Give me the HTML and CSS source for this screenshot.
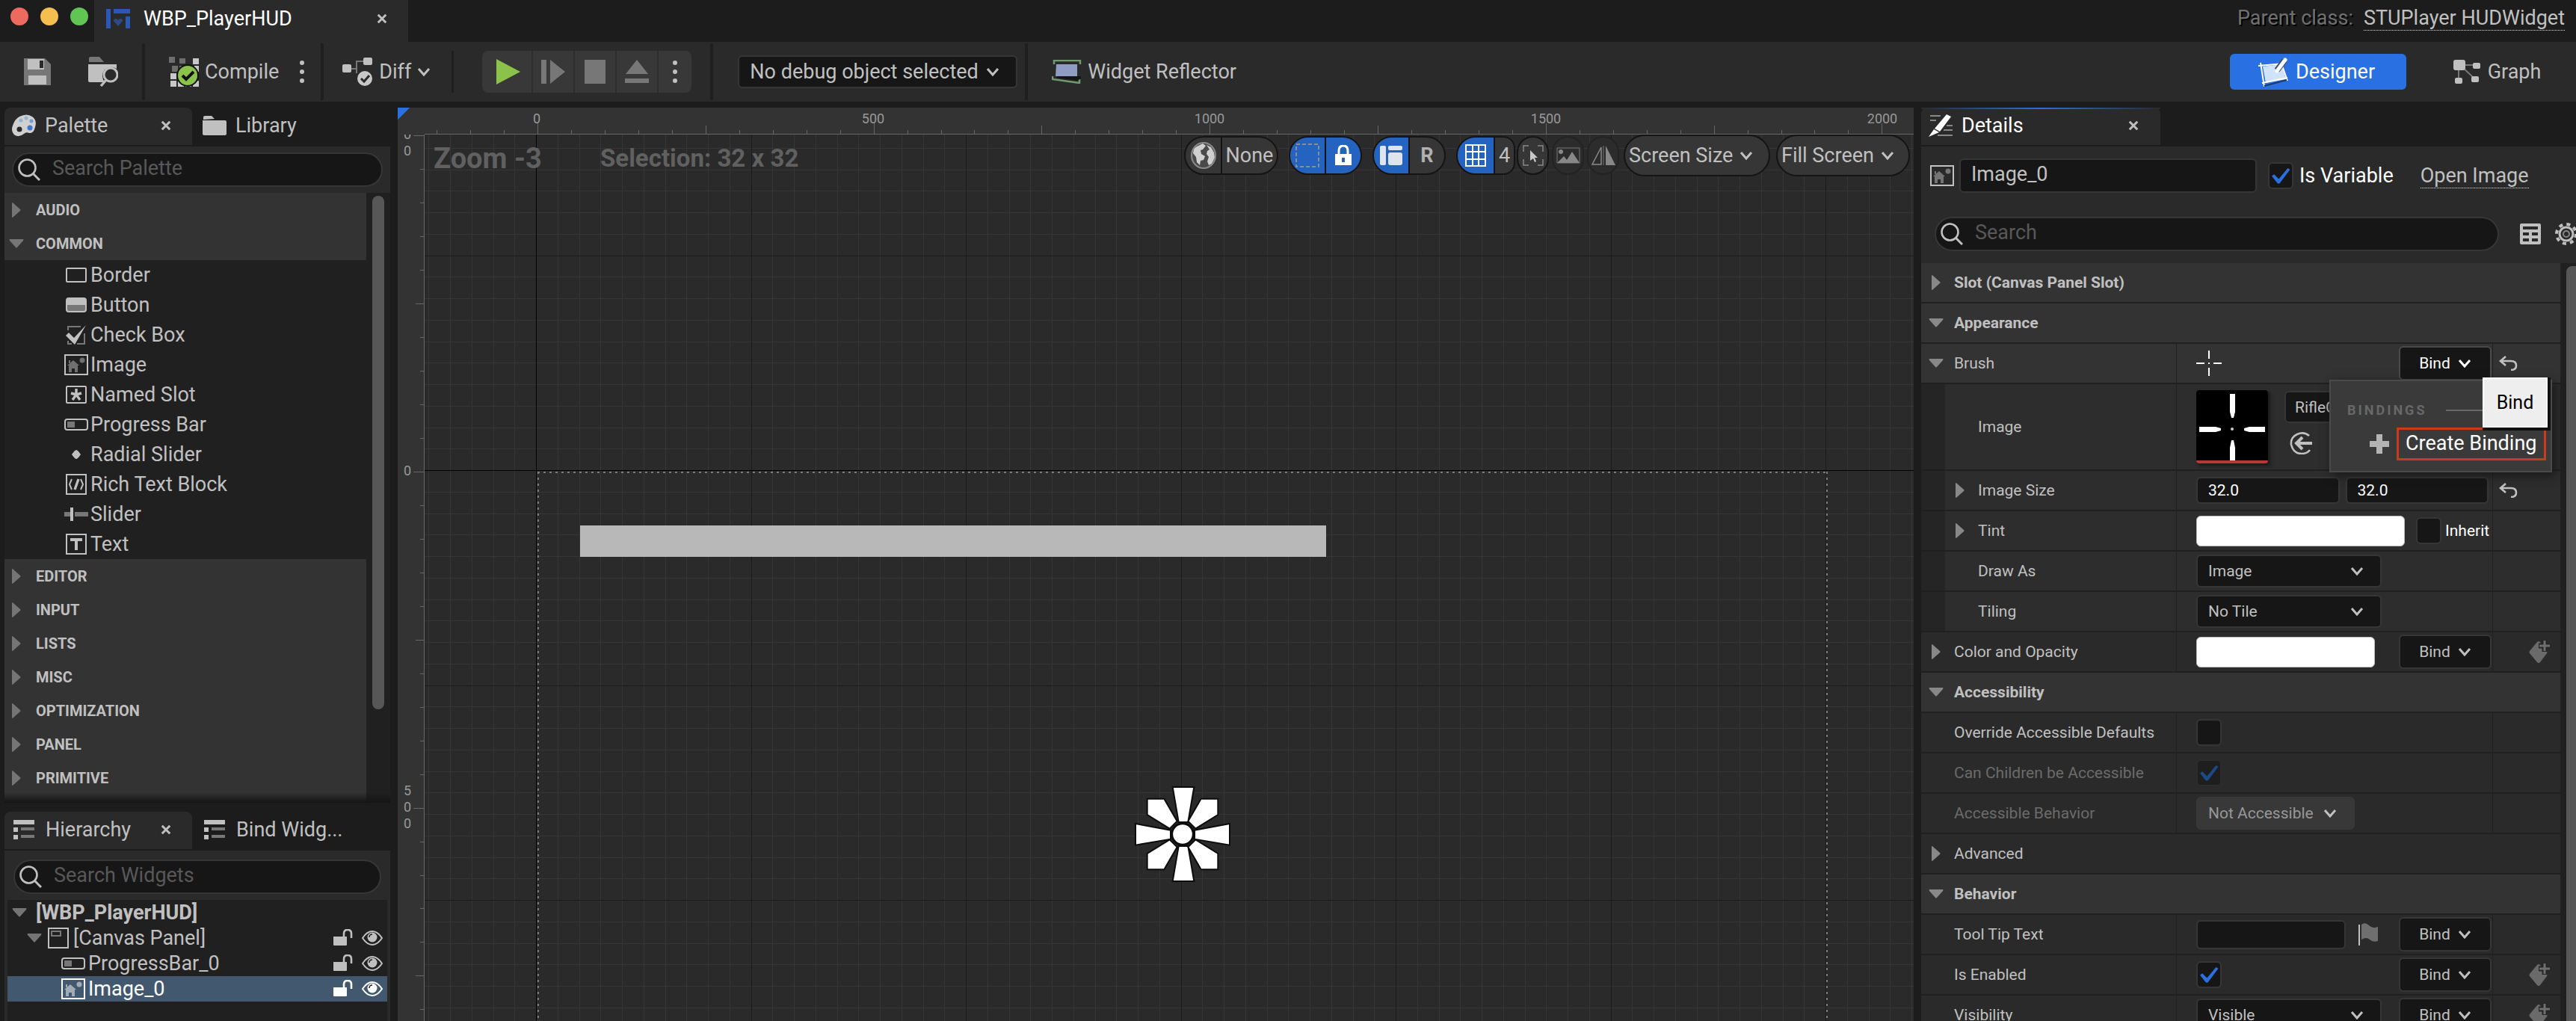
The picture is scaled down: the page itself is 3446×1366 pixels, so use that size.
FILE: index.html
```html
<!DOCTYPE html>
<html lang="en">
<head>
<meta charset="utf-8">
<title>WBP_PlayerHUD</title>
<link rel="stylesheet" href="styles.css">
</head>
<body>
<svg class="sprite" aria-hidden="true">
  <symbol id="i-chev" viewBox="0 0 18 12"><path d="M2 2l7 8 7-8" fill="none" stroke="currentColor" stroke-width="3"/></symbol>
  <symbol id="i-close" viewBox="0 0 16 16"><path d="M2 2l12 12M14 2L2 14" stroke="currentColor" stroke-width="3.4"/></symbol>
  <symbol id="i-dots" viewBox="0 0 6 32"><circle cx="3" cy="4" r="3" fill="currentColor"/><circle cx="3" cy="16" r="3" fill="currentColor"/><circle cx="3" cy="28" r="3" fill="currentColor"/></symbol>
  <symbol id="i-right" viewBox="0 0 20 20"><path d="M4 1q0-2 2 0l9 8q1 1 0 2l-9 8q-2 2-2 0z" fill="currentColor"/></symbol>
  <symbol id="i-down" viewBox="0 0 20 20"><path d="M1 4h18q1 0 0 2l-8 9q-1 1-2 0L1 6q-1-2 0-2z" fill="currentColor"/></symbol>
  <symbol id="i-search" viewBox="0 0 30 30"><circle cx="12.500" cy="12.500" r="11" fill="none" stroke="currentColor" stroke-width="2.600"/><path d="M20 20l9 9" stroke="currentColor" stroke-width="3"/></symbol>
  <symbol id="i-folder" viewBox="0 0 32 26"><path d="M1 5V2q0-2 2-2h9l4 4z" fill="currentColor"/><path d="M0 6h30q2 0 2 2v16q0 2-2 2H2q-2 0-2-2z" fill="currentColor"/></symbol>
  <symbol id="i-list" viewBox="0 0 28 26"><path d="M0 0h28v6H0zM0 10h6v6H0zM0 20h6v6H0z" fill="currentColor"/><path d="M10 10h18v4H10zM10 20h18v4H10z" fill="#777"/></symbol>
  <symbol id="i-border" viewBox="0 0 32 28"><rect x="3" y="5" width="26" height="18" rx="1" fill="none" stroke="currentColor" stroke-width="2"/></symbol>
  <symbol id="i-button" viewBox="0 0 32 28"><rect x="2" y="4" width="28" height="20" rx="4" fill="currentColor"/><path d="M4 14h24v6q0 2-2 2H6q-2 0-2-2z" fill="#777"/></symbol>
  <symbol id="i-check" viewBox="0 0 32 28"><path d="M5 8V3h17M27 12v14h-10M5 22v4h5" fill="none" stroke="#777" stroke-width="2"/><path d="M2 15l4-4 7 7L29 1 14 27z" fill="currentColor"/></symbol>
  <symbol id="i-image" viewBox="0 0 32 28"><rect x="1" y="1" width="30" height="26" fill="none" stroke="currentColor" stroke-width="2"/><path d="M4 15l8-7 8 7h-2v9h-4v-5h-4v5H6v-9zM6 8h2v4H6z" fill="currentColor" opacity=".5"/><circle cx="24" cy="8" r="3.500" fill="currentColor" opacity=".5"/></symbol>
  <symbol id="i-slot" viewBox="0 0 32 28"><rect x="3" y="3" width="26" height="22" rx="1" fill="none" stroke="currentColor" stroke-width="2"/><path d="M16 6v8M16 14l-7-2M16 14l7-2M16 14l-5 7M16 14l5 7" stroke="currentColor" stroke-width="3.400"/></symbol>
  <symbol id="i-progress" viewBox="0 0 32 28"><rect x="1" y="7" width="30" height="14" rx="3" fill="none" stroke="currentColor" stroke-width="2"/><path d="M4 10h10v8H4z" fill="currentColor" opacity=".55"/></symbol>
  <symbol id="i-radial" viewBox="0 0 32 28"><path d="M16 8q2 0 6 6-4 6-6 6t-6-6q4-6 6-6z" fill="currentColor"/></symbol>
  <symbol id="i-rich" viewBox="0 0 32 28"><rect x="3" y="1" width="26" height="26" fill="none" stroke="currentColor" stroke-width="2"/><path d="M10 7l-3 7 3 7M22 7l3 7-3 7" fill="none" stroke="currentColor" stroke-width="2"/><path d="M19 7l-5 14" stroke="currentColor" stroke-width="3.400"/></symbol>
  <symbol id="i-slider" viewBox="0 0 32 28"><path d="M0 11h8v6H0zM14 11h18v6H14z" fill="#777"/><path d="M8 5h4v18H8z" fill="currentColor"/></symbol>
  <symbol id="i-text" viewBox="0 0 32 28"><rect x="3" y="1" width="26" height="26" fill="none" stroke="currentColor" stroke-width="2"/><path d="M8 6h16v4h-6v12h-4V10H8z" fill="currentColor"/></symbol>
  <symbol id="i-canvas" viewBox="0 0 28 28"><rect x="1" y="1" width="26" height="26" fill="none" stroke="currentColor" stroke-width="2"/><rect x="5" y="5" width="12" height="6" fill="none" stroke="#777" stroke-width="2"/></symbol>
  <symbol id="i-unlock" viewBox="0 0 26 24"><path d="M0 10h18v11q0 1-1 1H1q-1 0-1-1z" fill="currentColor"/><path d="M14 10V6q0-5 5-5t5 5v6" fill="none" stroke="currentColor" stroke-width="2.600"/></symbol>
  <symbol id="i-eye" viewBox="0 0 28 20"><path d="M1 10q6-9 13-9t13 9q-6 9-13 9T1 10z" fill="none" stroke="currentColor" stroke-width="2"/><circle cx="14" cy="9" r="6.500" fill="currentColor"/><path d="M10 9q0-4 4-4" stroke="#222" fill="none" stroke-width="1.500"/></symbol>
  <symbol id="i-reset" viewBox="0 0 26 20"><path d="M9 1L2 7l7 6M3 7h13q7 0 7 6t-7 6" fill="none" stroke="currentColor" stroke-width="2.600"/></symbol>
  <symbol id="i-key" viewBox="0 0 32 32"><path d="M13 3q2-2 4 0l9 12q1 2 0 3L17 30q-2 2-4 0L3 18q-1-2 0-3z" fill="#6a6a6a"/><path d="M23 0v16M15 8h16" stroke="#262626" stroke-width="7"/><path d="M23 1v14M16 8h14" stroke="#6f6f6f" stroke-width="3"/></symbol>
</svg>
<div class="app">
  <header class="titlebar">
    <div class="lights"><span class="light light-red"></span><span class="light light-amber"></span><span class="light light-green"></span></div>
    <div class="doc-tab">
      <svg width="32" height="26" viewBox="0 0 32 26"><path d="M0 0h6v26H0zM10 0h22v6H10zM26 10h6v16h-6z" fill="#2b57b5"/><path d="M16 23l-6-7q0-3 3-3 2 0 3 2 1-2 3-2 3 0 3 3z" fill="#2b4a86"/></svg>
      <span class="doc-name">WBP_PlayerHUD</span>
      <button class="plain" aria-label="Close tab"><svg class="ic-close"><use href="#i-close"/></svg></button>
    </div>
    <div class="parent-class"><span class="parent-label">Parent class:</span><a class="dotted" href="#">STUPlayer HUDWidget</a></div>
  </header>

  <div class="toolbar">
    <div class="tb-file">
      <button class="plain" aria-label="Save"><svg width="36" height="36" viewBox="0 0 36 36"><path d="M0 0h28l8 8v28H0z" fill="#777"/><path d="M5 1h22v14H5z" fill="#c0c0c0"/><path d="M21 3h5v10h-5z" fill="#2a2a2a"/><path d="M6 23h24v12H6z" fill="#c0c0c0"/></svg></button>
      <button class="plain" aria-label="Browse"><svg width="40" height="40" viewBox="0 0 40 40"><path d="M1 7V2q0-2 2-2h12l6 7z" fill="#777"/><path d="M0 10h38v6q-8-5-16 1-6 8 0 17H2q-2 0-2-2z" fill="#c0c0c0"/><circle cx="30" cy="24" r="9" fill="none" stroke="#c0c0c0" stroke-width="3"/><path d="M24 31l-7 8" stroke="#c0c0c0" stroke-width="3.400"/></svg></button>
    </div>
    <div class="tb-compile">
      <button class="plain tb-btn"><svg width="40" height="40" viewBox="0 0 40 40"><path d="M0 0h8v8H0zM14 2h8v7h-8zM4 12h8v8H4zM14 12h8v6h-8z" fill="#6e6e6e"/><path d="M32 2h8v8h-8zM2 22h8v8H2zM2 32h8v8H2zM12 32h8v8h-8zM22 34h8v6h-8zM32 32h8v8h-8zM34 12h6v8h-6z" fill="#c8c8c8"/><circle cx="25" cy="25" r="14" fill="#8bc24a" stroke="#111" stroke-width="2"/><path d="M18 25l5 5 10-10" fill="none" stroke="#111" stroke-width="4"/></svg>Compile</button>
      <button class="plain" aria-label="Compile options"><svg class="ic-dots"><use href="#i-dots"/></svg></button>
    </div>
    <div class="tb-diff">
      <button class="plain tb-btn"><svg width="41" height="40" viewBox="0 0 41 40"><path d="M10 16h9V6h10M19 16v6" fill="none" stroke="#777" stroke-width="2"/><rect x="0" y="10" width="12" height="11" rx="2" fill="#c0c0c0"/><rect x="28" y="1" width="12" height="10" rx="2" fill="#c0c0c0"/><circle cx="30" cy="29" r="10" fill="#c8c8c8"/><path d="M25 29l4 4 7-8" fill="none" stroke="#2a2a2a" stroke-width="3"/></svg>Diff<svg class="ic-chev"><use href="#i-chev"/></svg></button>
    </div>
    <div class="tb-play">
      <div class="play-group">
        <button class="play-btn play-first" aria-label="Play"><svg width="32" height="34" viewBox="0 0 32 34"><path d="M0 0l32 17L0 34z" fill="#8bc24a"/></svg></button>
        <button class="play-btn" aria-label="Step"><svg width="32" height="32" viewBox="0 0 32 32"><path d="M0 0h7v32H0zM12 0l20 16-20 16z" fill="#777"/></svg></button>
        <button class="play-btn" aria-label="Stop"><svg width="28" height="32" viewBox="0 0 28 32"><path d="M0 0h28v32H0z" fill="#777"/></svg></button>
        <button class="play-btn" aria-label="Eject"><svg width="32" height="32" viewBox="0 0 32 32"><path d="M16 0l15 19H1zM0 25h32v6H0z" fill="#777"/></svg></button>
        <button class="play-btn play-last" aria-label="Play options"><svg class="ic-dots"><use href="#i-dots"/></svg></button>
      </div>
    </div>
    <div class="tb-debug">
      <span class="pick pick-debug"><select aria-label="Debug object"><option>No debug object selected</option></select><svg class="ic-chev"><use href="#i-chev"/></svg></span>
    </div>
    <div class="tb-reflect">
      <button class="plain tb-btn"><svg width="40" height="32" viewBox="0 0 40 32"><path d="M3 6V1h35v5M1 22v4l36 5v-5" fill="none" stroke="#6f9a72" stroke-width="2.500"/><path d="M6 6h28v16H5z" fill="#8f9cc4"/><path d="M8 22h31v3l-5 3L6 24z" fill="#151515"/></svg>Widget Reflector</button>
    </div>
    <div class="modes">
      <button class="mode mode-on"><svg width="40" height="40" viewBox="0 0 40 40"><path d="M6 13l25-3 6 20-27 5z" fill="#cfe3fb"/><path d="M0 12l36-3M3 8l5 32M5 35l34-7M31 9l8 23" fill="none" stroke="#fff" stroke-width="2"/><path d="M8 39l30-8" stroke="#1d3a70" stroke-width="2"/><path d="M35 5L25 18" stroke="#3b4c66" stroke-width="8"/><path d="M36 4L25 19" stroke="#fff" stroke-width="5" stroke-linecap="round"/></svg>Designer</button>
      <button class="mode mode-graph"><svg width="36" height="32" viewBox="0 0 36 32"><path d="M8 7h22M7 8v18M10 8l19 18" stroke="#777" stroke-width="2"/><rect width="16" height="14" rx="3" fill="#c0c0c0"/><rect x="26" y="4" width="10" height="8" rx="2" fill="#c0c0c0"/><rect x="2" y="24" width="10" height="8" rx="2" fill="#c0c0c0"/><rect x="24" y="22" width="10" height="8" rx="2" fill="#c0c0c0"/></svg>Graph</button>
    </div>
  </div>

  <main class="work">
    <aside class="left">
      <section class="dock dock-palette">
        <div class="tabs">
          <div class="tab tab-on"><svg width="32" height="30" viewBox="0 0 32 30"><path d="M10 3Q20-2 27 3t4 14q-2 9-8 8-4-2-7 1-6 5-12 2-6-5-3-13 3-9 9-12z" fill="#d0d0d0"/><circle cx="12" cy="8" r="2.500" fill="#8fb4d8"/><circle cx="19" cy="5" r="2.500" fill="#8fb4d8"/><circle cx="26" cy="9" r="2.500" fill="#6f9fd0"/><circle cx="24" cy="18" r="3.500" fill="#3f78c8"/><circle cx="10" cy="20" r="3.500" fill="#2a2a2a"/></svg><span class="tab-name">Palette</span><button class="plain" aria-label="Close Palette"><svg class="ic-close"><use href="#i-close"/></svg></button></div>
          <div class="tab"><svg width="32" height="26"><use href="#i-folder"/></svg><span class="tab-name">Library</span></div>
        </div>
        <div class="panel">
          <label class="search"><svg width="30" height="30"><use href="#i-search"/></svg><input type="text" aria-label="Search Palette" placeholder="Search Palette"></label>
          <div class="palette">
            <div class="palette-list">
              <h3 class="cat"><svg class="ic-arrow"><use href="#i-right"/></svg>AUDIO</h3>
              <h3 class="cat"><svg class="ic-arrow"><use href="#i-down"/></svg>COMMON</h3>
              <ul class="items">
                <li><svg class="ic-item"><use href="#i-border"/></svg>Border</li>
                <li><svg class="ic-item"><use href="#i-button"/></svg>Button</li>
                <li><svg class="ic-item"><use href="#i-check"/></svg>Check Box</li>
                <li><svg class="ic-item"><use href="#i-image"/></svg>Image</li>
                <li><svg class="ic-item"><use href="#i-slot"/></svg>Named Slot</li>
                <li><svg class="ic-item"><use href="#i-progress"/></svg>Progress Bar</li>
                <li><svg class="ic-item"><use href="#i-radial"/></svg>Radial Slider</li>
                <li><svg class="ic-item"><use href="#i-rich"/></svg>Rich Text Block</li>
                <li><svg class="ic-item"><use href="#i-slider"/></svg>Slider</li>
                <li><svg class="ic-item"><use href="#i-text"/></svg>Text</li>
              </ul>
              <h3 class="cat"><svg class="ic-arrow"><use href="#i-right"/></svg>EDITOR</h3>
              <h3 class="cat"><svg class="ic-arrow"><use href="#i-right"/></svg>INPUT</h3>
              <h3 class="cat"><svg class="ic-arrow"><use href="#i-right"/></svg>LISTS</h3>
              <h3 class="cat"><svg class="ic-arrow"><use href="#i-right"/></svg>MISC</h3>
              <h3 class="cat"><svg class="ic-arrow"><use href="#i-right"/></svg>OPTIMIZATION</h3>
              <h3 class="cat"><svg class="ic-arrow"><use href="#i-right"/></svg>PANEL</h3>
              <h3 class="cat"><svg class="ic-arrow"><use href="#i-right"/></svg>PRIMITIVE</h3>
              <div class="cat-rest"></div>
            </div>
            <div class="track"><div class="thumb"></div></div>
          </div>
        </div>
      </section>
      <section class="dock dock-tree">
        <div class="tabs">
          <div class="tab tab-on"><svg width="28" height="26"><use href="#i-list"/></svg><span class="tab-name">Hierarchy</span><button class="plain" aria-label="Close Hierarchy"><svg class="ic-close"><use href="#i-close"/></svg></button></div>
          <div class="tab"><svg width="28" height="26"><use href="#i-list"/></svg><span class="tab-name">Bind Widg...</span></div>
        </div>
        <div class="panel">
          <label class="search"><svg width="30" height="30"><use href="#i-search"/></svg><input type="text" aria-label="Search Widgets" placeholder="Search Widgets"></label>
          <ul class="tree">
            <li class="node node-root"><svg class="ic-arrow"><use href="#i-down"/></svg><span class="node-name">[WBP_PlayerHUD]</span></li>
            <li class="node node-canvas"><svg class="ic-arrow"><use href="#i-down"/></svg><svg class="ic-canvas"><use href="#i-canvas"/></svg><span class="node-name">[Canvas Panel]</span><button class="plain" aria-label="Lock"><svg class="ic-lock"><use href="#i-unlock"/></svg></button><button class="plain" aria-label="Visible"><svg class="ic-eye"><use href="#i-eye"/></svg></button></li>
            <li class="node node-leaf"><svg class="ic-item"><use href="#i-progress"/></svg><span class="node-name">ProgressBar_0</span><button class="plain" aria-label="Lock"><svg class="ic-lock"><use href="#i-unlock"/></svg></button><button class="plain" aria-label="Visible"><svg class="ic-eye"><use href="#i-eye"/></svg></button></li>
            <li class="node node-leaf node-on"><svg class="ic-item"><use href="#i-image"/></svg><span class="node-name">Image_0</span><button class="plain" aria-label="Lock"><svg class="ic-lock"><use href="#i-unlock"/></svg></button><button class="plain" aria-label="Visible"><svg class="ic-eye"><use href="#i-eye"/></svg></button></li>
          </ul>
        </div>
      </section>
    </aside>

    <section class="designer">
      <div class="corner"></div>
      <svg class="ruler ruler-h">
        <path id="ticks-h" class="tick"/>
        <g class="ruler-text"><text x="150" y="21">0</text><text x="600" y="21">500</text><text x="1050" y="21">1000</text><text x="1500" y="21">1500</text><text x="1950" y="21">2000</text></g>
      </svg>
      <svg class="ruler ruler-v">
        <path id="ticks-v" class="tick"/>
        <g class="ruler-text"><text x="13" y="6">0</text><text x="13" y="28">0</text><text x="13" y="456">0</text><text x="13" y="884">5</text><text x="13" y="906">0</text><text x="13" y="928">0</text></g>
      </svg>
      <div class="canvas">
        <svg class="grid"><path id="grid-minor" class="grid-minor"/><path id="grid-major" class="grid-major"/><path id="grid-axis" class="grid-axis"/></svg>
        <svg class="screen-frame"><path d="M0 1h1726M1 0v971M1725 0v971M0 970h1726"/></svg>
        <div class="bar-widget"></div>
        <svg class="reticle" viewBox="0 0 384 384"><g fill="#fff" stroke="#0c0c0c" stroke-width="6"><path d="M152 3h86l-24 141h-38zM152 381h86l-24-141h-38zM3 150v86l141-24v-36zM381 150v86l-141-24v-36zM50 50h68l52 90-30 30-90-56zM334 50h-68l-52 90 30 30 90-56zM50 334h68l52-90-30-30-90 56zM334 334h-68l-52-90 30-30 90 56z"/><circle cx="192" cy="192" r="43" stroke-width="9"/></g></svg>
        <div class="overlay">
          <span class="zoom">Zoom -3</span>
          <span class="selection">Selection: 32 x 32</span>
          <div class="vp-tools">
            <button class="pill pill-none"><span class="seg"><svg width="34" height="36" viewBox="0 0 34 36"><ellipse cx="17" cy="18" rx="16" ry="17" fill="#4a4a4a"/><path d="M8 6l8-4 4 3-4 5-3 1 1 5 5 3-2 5-4 1-1 6-4-4-1-7-4-5 1-6zM21 4l6 3 4 7 1 7-4 8-4 2-2-5 2-6-3-4 1-4 3-2z" fill="#d0d0d0"/><ellipse cx="17" cy="18" rx="16" ry="17" fill="none" stroke="#8a8a8a" stroke-width="2"/></svg></span><span class="seg">None</span></button>
            <div class="pill pill-pair">
              <button class="seg seg-on" aria-label="Show outline"><svg width="32" height="32" viewBox="0 0 32 32"><rect x="1" y="1" width="30" height="30" fill="none" stroke="#8a8f88" stroke-width="2" stroke-dasharray="5 3"/></svg></button>
              <button class="seg seg-on" aria-label="Respect locks"><svg width="24" height="28" viewBox="0 0 24 28"><path d="M6 13V8q0-7 6-7t6 7v5" fill="none" stroke="#fff" stroke-width="3"/><path d="M1 12h22v15H1z" fill="#fff"/><path d="M10 17h4v6h-4z" fill="#2563c0"/></svg></button>
            </div>
            <div class="pill pill-pair">
              <button class="seg seg-on" aria-label="Layout transform"><svg width="30" height="26" viewBox="0 0 30 26"><rect width="8" height="26" rx="2" fill="#dde4ee"/><rect x="11" width="19" height="6" rx="2" fill="#dde4ee"/><rect x="11" y="9" width="19" height="17" rx="3" fill="#dde4ee"/></svg></button>
              <button class="seg seg-r">R</button>
            </div>
            <div class="pill pill-grid">
              <button class="seg seg-on" aria-label="Grid snap"><svg width="28" height="30" viewBox="0 0 28 30"><path d="M1 1h26v28H1zM1 10h26M1 20h26M10 1v28M18 1v28" fill="none" stroke="#fff" stroke-width="2"/></svg></button>
              <button class="seg">4</button>
            </div>
            <button class="pill pill-dot" aria-label="Selection"><svg width="28" height="28" viewBox="0 0 28 28"><path d="M1 9V1h7M20 1h7v8M27 19v8h-7M8 27H1v-8" fill="none" stroke="#888" stroke-width="1.500"/><path d="M10 7v14l4-3 2 5 2-1-2-5h4z" fill="#c8c8c8"/></svg></button>
            <button class="pill pill-dot pill-dim" aria-label="Background"><svg width="32" height="22" viewBox="0 0 32 22"><path d="M1 21V1h30v20z" fill="none" stroke="#777"/><circle cx="6" cy="6" r="3" fill="#888"/><path d="M1 21l9-9 4 5 7-11 10 15z" fill="#888"/></svg></button>
            <button class="pill pill-dot pill-dim" aria-label="Flip"><svg width="32" height="26" viewBox="0 0 32 26"><path d="M13 2v23H1z" fill="none" stroke="#888" stroke-width="1.500"/><path d="M16 0v26" stroke="#777"/><path d="M19 0v26h13z" fill="#888"/></svg></button>
            <button class="pill pill-text pill-size">Screen Size<svg class="ic-chev"><use href="#i-chev"/></svg></button>
            <button class="pill pill-text pill-fill">Fill Screen<svg class="ic-chev"><use href="#i-chev"/></svg></button>
          </div>
        </div>
      </div>
    </section>

    <aside class="right">
      <div class="tabs">
        <div class="tab tab-on tab-details"><svg width="32" height="30" viewBox="0 0 32 30"><path d="M2 2h14M2 8h8M24 15h8M20 21h12M12 28h20" stroke="#888" stroke-width="2"/><path d="M24 0l6 3-15 20-7-4zM7 20l7 4L0 30z" fill="#fff"/></svg><span class="tab-name">Details</span><button class="plain" aria-label="Close Details"><svg class="ic-close"><use href="#i-close"/></svg></button></div>
      </div>
      <div class="panel details">
        <div class="ident">
          <svg class="ic-item"><use href="#i-image"/></svg>
          <input class="field name-field" type="text" aria-label="Widget name" value="Image_0">
          <label class="is-var"><input class="tick-box" type="checkbox" checked>Is Variable</label>
          <a class="dotted" href="#">Open Image</a>
        </div>
        <div class="find">
          <label class="search"><svg width="30" height="30"><use href="#i-search"/></svg><input type="text" aria-label="Search details" placeholder="Search"></label>
          <button class="plain" aria-label="Table view"><svg width="28" height="28" viewBox="0 0 28 28"><rect width="28" height="28" rx="2" fill="#c0c0c0"/><path d="M4 4h20v4H4zM4 12h8v4H4zM16 12h8v4h-8zM4 20h8v4H4zM16 20h8v4h-8z" fill="#2a2a2a"/></svg></button>
          <button class="plain" aria-label="Settings"><svg width="30" height="30" viewBox="0 0 30 30"><circle cx="15" cy="15" r="13" fill="none" stroke="#c0c0c0" stroke-width="4" stroke-dasharray="5 5.200"/><circle cx="15" cy="15" r="9" fill="none" stroke="#c0c0c0" stroke-width="3"/><circle cx="15" cy="15" r="4" fill="none" stroke="#888" stroke-width="2"/></svg></button>
        </div>
        <div class="props-wrap">
          <div class="props">
            <div class="row head"><svg class="ic-arrow"><use href="#i-right"/></svg>Slot (Canvas Panel Slot)</div>
            <div class="row head"><svg class="ic-arrow"><use href="#i-down"/></svg>Appearance</div>
            <div class="row row-brush"><div class="key"><svg class="ic-arrow"><use href="#i-down"/></svg>Brush</div><div class="val"><svg width="34" height="34" viewBox="0 0 34 34"><path d="M17 0v11M17 23v11M0 17h11M23 17h11M16 17h2" stroke="#fff" stroke-width="2"/></svg><button class="bind bind-open">Bind<svg class="ic-chev"><use href="#i-chev"/></svg></button></div><div class="act"><button class="plain" aria-label="Reset"><svg class="ic-reset"><use href="#i-reset"/></svg></button></div></div>
            <div class="row row-image nest"><div class="key">Image</div><div class="val"><svg class="asset" viewBox="0 0 96 98"><rect width="96" height="98" rx="4" fill="#000"/><path d="M45 5h7v24l-2 8h-3l-2-8zM45 94h7V77l-2-10h-3l-2 10zM4 49v7h22l7-2v-3l-7-2zM92 49v7H71l-7-2v-3l7-2z" fill="#fff"/><circle cx="48" cy="52" r="2" fill="#ccc"/><path d="M0 94h96q0 4-4 4H4q-4 0-4-4z" fill="#b43a3a"/></svg><div class="asset-side"><button class="asset-pick">RifleC</button><button class="plain" aria-label="Use selected asset"><svg width="32" height="30" viewBox="0 0 32 30"><path d="M26 5Q19-1 10 3T2 17q3 12 14 12 7 0 11-5" fill="none" stroke="#c0c0c0" stroke-width="2.600"/><path d="M10 15h20M17 7l-8 8 8 8" fill="none" stroke="#c0c0c0" stroke-width="4"/></svg></button></div></div><div class="act"></div></div>
            <div class="row nest"><div class="key"><svg class="ic-arrow"><use href="#i-right"/></svg>Image Size</div><div class="val val-pair"><input class="field" type="text" aria-label="Width" value="32.0"><input class="field" type="text" aria-label="Height" value="32.0"></div><div class="act"><button class="plain" aria-label="Reset"><svg class="ic-reset"><use href="#i-reset"/></svg></button></div></div>
            <div class="row nest"><div class="key"><svg class="ic-arrow"><use href="#i-right"/></svg>Tint</div><div class="val"><button class="swatch swatch-tint" aria-label="Tint"></button><label class="inherit"><input class="tick-box" type="checkbox">Inherit</label></div><div class="act"></div></div>
            <div class="row nest"><label class="key" for="draw-as">Draw As</label><div class="val"><span class="pick"><select id="draw-as"><option>Image</option></select><svg class="ic-chev"><use href="#i-chev"/></svg></span></div><div class="act"></div></div>
            <div class="row nest"><label class="key" for="tiling">Tiling</label><div class="val"><span class="pick"><select id="tiling"><option>No Tile</option></select><svg class="ic-chev"><use href="#i-chev"/></svg></span></div><div class="act"></div></div>
            <div class="row"><div class="key"><svg class="ic-arrow"><use href="#i-right"/></svg>Color and Opacity</div><div class="val"><button class="swatch swatch-color" aria-label="Color and Opacity"></button><button class="bind">Bind<svg class="ic-chev"><use href="#i-chev"/></svg></button></div><div class="act act-key"><button class="plain" aria-label="Add key"><svg width="32" height="32"><use href="#i-key"/></svg></button></div></div>
            <div class="row head"><svg class="ic-arrow"><use href="#i-down"/></svg>Accessibility</div>
            <div class="row"><label class="key" for="override">Override Accessible Defaults</label><div class="val"><input class="tick-box" id="override" type="checkbox"></div><div class="act"></div></div>
            <div class="row"><label class="key key-off" for="children">Can Children be Accessible</label><div class="val"><input class="tick-box" id="children" type="checkbox" checked disabled></div><div class="act"></div></div>
            <div class="row"><label class="key key-off" for="behavior">Accessible Behavior</label><div class="val"><span class="pick pick-off"><select id="behavior" disabled><option>Not Accessible</option></select><svg class="ic-chev"><use href="#i-chev"/></svg></span></div><div class="act"></div></div>
            <div class="row sub"><svg class="ic-arrow"><use href="#i-right"/></svg>Advanced</div>
            <div class="row head"><svg class="ic-arrow"><use href="#i-down"/></svg>Behavior</div>
            <div class="row"><label class="key" for="tip">Tool Tip Text</label><div class="val"><input class="field tip-field" id="tip" type="text"><svg class="flag" width="26" height="30" viewBox="0 0 26 30"><path d="M1 2v28" stroke="#c0c0c0" stroke-width="2"/><path d="M4 2q5-4 10 1t12 2v19q-7 2-11-2T4 22z" fill="#6f6f6f"/></svg><button class="bind">Bind<svg class="ic-chev"><use href="#i-chev"/></svg></button></div><div class="act"></div></div>
            <div class="row"><label class="key" for="enabled">Is Enabled</label><div class="val"><input class="tick-box" id="enabled" type="checkbox" checked><button class="bind">Bind<svg class="ic-chev"><use href="#i-chev"/></svg></button></div><div class="act act-key"><button class="plain" aria-label="Add key"><svg width="32" height="32"><use href="#i-key"/></svg></button></div></div>
            <div class="row"><label class="key" for="visibility">Visibility</label><div class="val"><span class="pick"><select id="visibility"><option>Visible</option></select><svg class="ic-chev"><use href="#i-chev"/></svg></span><button class="bind">Bind<svg class="ic-chev"><use href="#i-chev"/></svg></button></div><div class="act act-key"><button class="plain" aria-label="Add key"><svg width="32" height="32"><use href="#i-key"/></svg></button></div></div>
          </div>
          <div class="track track-right"><div class="thumb thumb-right"></div></div>
          <div class="menu">
            <div class="menu-head"><span>BINDINGS</span><hr></div>
            <button class="menu-item"><svg width="26" height="26" viewBox="0 0 26 26"><path d="M9 0h8v9h9v8h-9v9H9v-9H0V9h9z" fill="#b4b4b4"/></svg><span class="marked">Create Binding</span></button>
          </div>
          <div class="tooltip" role="tooltip">Bind</div>
        </div>
      </div>
    </aside>
  </main>
</div>
<script src="script.js"></script>
</body>
</html>
```
FILE: styles.css
```css
* { box-sizing: border-box; }

body {
  margin: 0;
  background: #1c1c1c;
  color: #c0c0c0;
  font-family: Roboto, "Liberation Sans", sans-serif;
  font-size: 27px;
  line-height: 32px;
}

button, input, select { font: inherit; color: inherit; margin: 0; }
button { padding: 0; border: 0; background: none; white-space: nowrap; }
input::placeholder { color: #585858; opacity: 1; }
svg { display: block; flex: none; }
ul { list-style: none; margin: 0; padding: 0; }
h3 { margin: 0; }

.sprite { position: absolute; width: 0; height: 0; }
.plain { display: flex; align-items: center; }
.ic-chev { width: 18px; height: 12px; }
.ic-close { width: 14px; height: 14px; }
.ic-dots { width: 6px; height: 32px; }
.ic-arrow { width: 20px; height: 20px; color: #757575; }
.ic-item { width: 32px; height: 28px; }
.ic-canvas { width: 28px; height: 28px; }
.ic-lock { width: 26px; height: 24px; }
.ic-eye { width: 28px; height: 20px; }
.ic-reset { width: 26px; height: 20px; }

.app { height: 100vh; display: flex; flex-direction: column; overflow: hidden; }

/* Title bar */
.titlebar { height: 56px; flex: none; display: flex; }
.lights { width: 126px; display: flex; gap: 16px; padding: 10px 0 0 14px; }
.light { width: 24px; height: 24px; border-radius: 50%; }
.light-red { background: #ed6a5e; }
.light-amber { background: #f5bf4f; }
.light-green { background: #61c554; }
.doc-tab { width: 420px; background: #2a2a2a; display: flex; align-items: center; padding: 0 28px 6px 16px; gap: 18px; color: #fff; }
.doc-name { flex: 1; }
.doc-tab .plain, .tab .plain { color: #c0c0c0; }
.parent-class { margin-left: auto; padding: 8px 15px 0 0; display: flex; align-items: flex-start; gap: 14px; }
.parent-label { color: #707070; text-shadow: 2px 2px 0 #000; }
.dotted { color: inherit; text-decoration: none; border-bottom: 1px dotted #e0e0e0; }

/* Toolbar */
.toolbar { height: 80px; flex: none; background: #2a2a2a; display: flex; align-items: center; padding: 2px 0; }
.toolbar > div { display: flex; align-items: center; height: 100%; }
.tb-file { padding: 0 32px; gap: 50px; border-right: 4px solid #1f1f1f; }
.tb-btn { gap: 8px; }
.tb-compile { padding: 0 22px 0 32px; gap: 28px; border-right: 4px solid #1f1f1f; }
.tb-diff { padding: 0 28px 0 25px; }
.toolbar > .tb-diff { height: 56px; border-right: 3px solid #1f1f1f; }
.tb-play { padding: 0 25px 0 38px; border-right: 4px solid #1f1f1f; }
.play-group { display: flex; background: #383838; border-radius: 8px; }
.play-btn { width: 56px; height: 56px; display: grid; place-items: center; border-right: 2px solid #2e2e2e; }
.play-first { width: 68px; padding-left: 4px; }
.play-last { width: 44px; border-right: 0; }
.tb-debug { padding: 0 10px 0 33px; border-right: 4px solid #1f1f1f; }
.tb-reflect { padding-left: 32px; }
.modes { margin-left: auto; }
.mode { height: 48px; display: flex; align-items: center; justify-content: center; gap: 10px; width: 227px; border-radius: 6px; }
.mode-on { width: 236px; padding-right: 4px; background: #2970e2; color: #fff; }
.mode-graph { padding-left: 16px; }

/* Drop-downs */
.pick { display: inline-grid; align-items: center; width: 248px; height: 44px; }
.pick > * { grid-area: 1 / 1; }
.pick select { appearance: none; width: 100%; height: 100%; padding: 0 14px; background: #161616; border: 2px solid #363636; border-radius: 6px; }
.pick .ic-chev { justify-self: end; margin-right: 24px; pointer-events: none; }
.pick-debug { width: 374px; }
.pick-off { width: 212px; }
.pick-off select { background: #383838; border-color: #383838; color: #979797; opacity: 1; }

/* Docks */
.work { flex: 1; min-height: 0; display: grid; grid-template-columns: 516px minmax(0, 1fr) 876px; gap: 10px; padding: 8px 0 0 6px; }
.left { display: flex; flex-direction: column; min-height: 0; gap: 12px; }
.dock { display: flex; flex-direction: column; min-height: 0; }
.dock-palette { flex: 930 0 0; }
.dock-tree { flex: 280 0 0; }
.tabs { display: flex; height: 52px; flex: none; }
.tab { display: flex; align-items: center; height: 50px; width: 251px; padding: 0 28px 2px 14px; gap: 12px; }
.dock-palette .tab { padding-left: 10px; }
.tab-on { background: #2a2a2a; border-radius: 8px 8px 0 0; }
.tab-name { flex: 1; }
.dock-tree .tab { gap: 15px; padding-left: 12px; }
.tab + .tab { margin-left: 4px; }
.panel { flex: 1; min-height: 0; background: #2a2a2a; display: flex; flex-direction: column; }

.search { display: flex; align-items: center; gap: 16px; height: 46px; margin: 8px 10px; padding: 0 6px; background: #161616; border: 2px solid #363636; border-radius: 23px; }
.search input { flex: 1; min-width: 0; background: none; border: 0; padding: 0 0 4px; outline: 0; }
.dock-tree .search { margin: 12px 12px 8px; }

.palette { flex: 1; min-height: 0; display: flex; background: #202020; position: relative; }
.palette::after { content: ""; position: absolute; left: 0; right: 0; bottom: 0; height: 14px; background: linear-gradient(transparent, #151515); }
.palette-list { flex: 1; min-height: 0; overflow: hidden; display: flex; flex-direction: column; }
.cat { display: flex; align-items: center; flex: none; height: 45px; gap: 16px; padding-left: 6px; background: #333; font-size: 20px; }
.cat-rest { flex: 1; background: #333; }
.items li { display: flex; align-items: center; height: 40px; gap: 3px; padding-left: 80px; }
.track { width: 32px; padding: 4px 8px; }
.thumb { height: 85%; border-radius: 8px; background: #575757; }

.tree { flex: 1; margin: 0 4px; background: #202020; }
.node { display: flex; align-items: center; height: 34px; padding: 0 6px; gap: 12px; }
.node-name { flex: 1; }
.node-root { font-weight: 700; }
.node-canvas { padding-left: 26px; }
.node-canvas .ic-canvas { margin: 0 -6px 0 -4px; }
.node-leaf { padding-left: 72px; }
.node-leaf .ic-item { margin-right: -8px; }
.node-on { background: #42586f; color: #fff; }

/* Designer viewport */
.designer { display: grid; grid-template: 36px minmax(0, 1fr) / 36px minmax(0, 1fr); background: #333; overflow: hidden; }
.corner { background: linear-gradient(135deg, #2970e2 11px, transparent 12px); }
.ruler { width: 100%; height: 100%; }
.ruler-h { border-bottom: 1px solid #666; }
.ruler-v { border-right: 1px solid #666; }
.tick { stroke: #666; fill: none; shape-rendering: crispEdges; }
.ruler-text { fill: #999; font-size: 18px; text-anchor: middle; }
.canvas { position: relative; background: #2a2a2a; overflow: hidden; }
.grid { position: absolute; inset: 0; width: 100%; height: 100%; }
.grid path { fill: none; shape-rendering: crispEdges; }
.grid-minor { stroke: #363636; }
.grid-major { stroke: #1b1b1b; }
.grid-axis { stroke: #000; }
.screen-frame { position: absolute; left: 151px; top: 451px; width: 1726px; height: 971px; fill: none; stroke: #7a7a7a; stroke-width: 2; stroke-dasharray: 3 5; }
.bar-widget { position: absolute; left: 208px; top: 523px; width: 998px; height: 42px; background: #b8b8b8; }
.reticle { position: absolute; left: 950px; top: 872px; width: 128px; height: 128px; }
.overlay { position: absolute; inset: 0 5px auto 12px; display: flex; align-items: center; height: 56px; }
.zoom, .selection { font-weight: 700; color: #606060; padding-top: 8px; }
.zoom { width: 223px; font-size: 38px; }
.selection { font-size: 33px; }
.vp-tools { margin-left: auto; display: flex; align-items: center; }
.pill { display: flex; height: 52px; border: 2px solid #141414; border-radius: 26px; background: #363636; overflow: hidden; }
.seg { flex: 1; display: grid; place-items: center; }
.seg + .seg { border-left: 2px solid #141414; }
.seg-on { background: #2563c0; }
.seg-r { font-weight: 700; font-size: 27px; color: #b0b0b0; }
.pill-none { width: 126px; margin-right: 14px; }
.pill-none .seg:first-child { flex: 0 0 47px; }
.pill-pair { width: 98px; margin-right: 14px; }
.pill-grid { width: 79px; margin-right: 2px; border-radius: 26px 16px 16px 26px; }
.pill-grid .seg-on { flex: 0 0 48px; }
.pill-dot { width: 43px; margin-right: 4px; align-items: center; justify-content: center; }
.pill-dim { background: #2c2c2c; border-color: #232323; }
.pill-text { height: 56px; align-items: center; justify-content: flex-start; gap: 9px; padding-left: 5px; border-radius: 28px; }
.pill-size { width: 196px; margin: 0 8px 0 2px; }
.pill-fill { width: 179px; }

/* Details */
.right { display: flex; flex-direction: column; min-width: 0; min-height: 0; }
.tab-details { width: 320px; color: #fff; padding: 0 29px 4px 10px; border-top: 2px solid; border-image: linear-gradient(90deg, #2a2a2a, #2970e2, #2a2a2a) 1; }
.ident { display: flex; align-items: center; height: 46px; margin: 16px 12px 32px; }
.field { background: #161616; border: 2px solid #363636; border-radius: 6px; min-width: 0; padding: 0 14px; }
.name-field { width: 398px; height: 46px; margin: 0 15px 0 7px; padding-bottom: 4px; }
.is-var { display: flex; align-items: center; gap: 8px; color: #fff; margin-right: 36px; }
.tick-box { appearance: none; width: 34px; height: 36px; flex: none; background: #161616; border: 2px solid #363636; border-radius: 6px; display: grid; place-items: center; }
.tick-box:checked::before { content: ""; width: 26px; height: 22px; background: #2970e2; clip-path: polygon(4% 52%, 16% 42%, 40% 70%, 86% 4%, 98% 12%, 44% 98%, 34% 98%); }
.tick-box:disabled { background: #1e1e1e; border-color: #2c2c2c; }
.tick-box:disabled:checked::before { background: #1b4a86; }
.find { display: flex; align-items: center; height: 46px; gap: 19px; margin: 0 -2px 16px 18px; }
.find .search { flex: 1; margin: 0 9px 0 0; }

.props-wrap { position: relative; flex: 1; min-height: 0; display: flex; background: #202020; font-size: 21px; line-height: 26px; }
.props { flex: 1; min-width: 0; overflow: hidden; display: flex; flex-direction: column; gap: 2px; }
.row { flex: none; height: 52px; display: grid; grid-template-columns: 341px minmax(0, 1fr) 90px; gap: 1px; }
.row > div, .row > .key { background: #2a2a2a; display: flex; align-items: center; }
.head, .sub { display: flex; align-items: center; gap: 14px; padding-left: 10px; background: #333; font-weight: 700; }
.sub { background: #2a2a2a; font-weight: 400; }
.row .key { padding-left: 44px; }
.row .key:has(.ic-arrow) { padding-left: 10px; gap: 14px; }
.ic-arrow { flex: none; }
.props .ic-arrow { color: #888; }
.row.row-brush > div { background: #333; }
.row-image { height: 114px; }
.row.nest > div { background: #2d2d2d; }
.row.nest > .key { border-left: 32px solid #252525; background: #2d2d2d; }
.row .key-off { color: #6b6b6b; }
.row .val { padding: 0 1px 0 26px; }
.act { padding-left: 8px; }
.row .act-key { justify-content: flex-end; padding-right: 12px; }
.bind { width: 124px; height: 46px; margin-left: auto; display: flex; align-items: center; justify-content: center; gap: 10px; background: #161616; border: 2px solid #363636; border-radius: 6px; }
.bind-open { color: #fff; border-color: #4a4a4a; }
.asset { width: 96px; height: 98px; box-shadow: 3px 3px 4px #1a1a1a; }
.asset-side { margin-left: 22px; align-self: flex-start; padding-top: 9px; display: grid; gap: 12px; }
.asset-pick { height: 43px; width: 180px; padding-left: 12px; text-align: left; background: #161616; border: 2px solid #363636; border-radius: 6px; }
.asset-side .plain { padding-left: 7px; }
.row .val-pair { gap: 8px; padding-right: 5px; }
.val-pair .field { flex: 1; height: 36px; color: #fff; }
.swatch { height: 41px; background: #fff; border: 1px solid #bbb; border-radius: 6px; }
.swatch-tint { width: 279px; }
.swatch-color { width: 239px; }
.inherit { display: flex; align-items: center; gap: 5px; margin-left: 15px; color: #fff; }
.tip-field { width: 200px; height: 39px; }
.flag { margin-left: 17px; }
.track-right { width: 21px; padding: 4px 0 0 8px; }
.thumb-right { height: 100%; border-radius: 8px 0 0 0; }

.menu { position: absolute; right: 32px; top: 156px; width: 298px; height: 124px; background: #3a3a3a; border: 2px solid #4a4a4a; box-shadow: 4px 4px 12px #181818; }
.menu-head { display: flex; align-items: center; height: 62px; padding: 16px 0 0 22px; gap: 26px; font-size: 18px; font-weight: 700; color: #686868; letter-spacing: 3px; }
.menu-head hr { flex: 1; border: 0; height: 2px; margin: 0; background: #686868; }
.menu-item { display: flex; align-items: center; gap: 10px; height: 44px; padding-left: 52px; font-size: 27px; color: #fff; }
.marked { height: 44px; line-height: 36px; padding: 0 9px; border: 3px solid #cc3a1e; }
.tooltip { position: absolute; right: 38px; top: 153px; width: 87px; height: 67px; display: grid; place-items: center; background: #eee; color: #000; border: 2px solid #fff; box-shadow: 2px 2px 0 2px #111; font-size: 25px; }
```
FILE: script.js
```js
// Draws the ruler ticks and the design grid for the current viewport size.
const ORIGIN = { x: 151, y: 451 };      // ruler zero, inside the canvas
const GRID_ORIGIN = { x: 149, y: 449 }; // grid axes
const TICK = 44.96;                     // 50 units
const CELL = 28.75;

function ticks(length, origin, horizontal) {
  let d = '';
  for (let i = Math.ceil(-origin / TICK); origin + i * TICK < length; i++) {
    const p = Math.round(origin + i * TICK);
    const size = i % 10 === 0 ? 15 : i % 5 === 0 ? 12 : 6;
    d += horizontal ? `M${p} 36v${-size}` : `M36 ${p}h${-size}`;
  }
  return d;
}

function draw() {
  const box = document.querySelector('.canvas').getBoundingClientRect();
  document.getElementById('ticks-h').setAttribute('d', ticks(box.width, ORIGIN.x, true));
  document.getElementById('ticks-v').setAttribute('d', ticks(box.height, ORIGIN.y, false));
  const d = { minor: '', major: '', axis: '' };
  const add = (length, origin, line) => {
    for (let i = Math.ceil(-origin / CELL); origin + i * CELL < length; i++) {
      const kind = i === 0 ? 'axis' : i % 10 === 0 ? 'major' : 'minor';
      d[kind] += line(Math.round(origin + i * CELL));
    }
  };
  add(box.width, GRID_ORIGIN.x, p => `M${p} 0V${box.height}`);
  add(box.height, GRID_ORIGIN.y, p => `M0 ${p}H${box.width}`);
  for (const kind in d) document.getElementById('grid-' + kind).setAttribute('d', d[kind]);
}

draw();
window.addEventListener('resize', draw);
```
